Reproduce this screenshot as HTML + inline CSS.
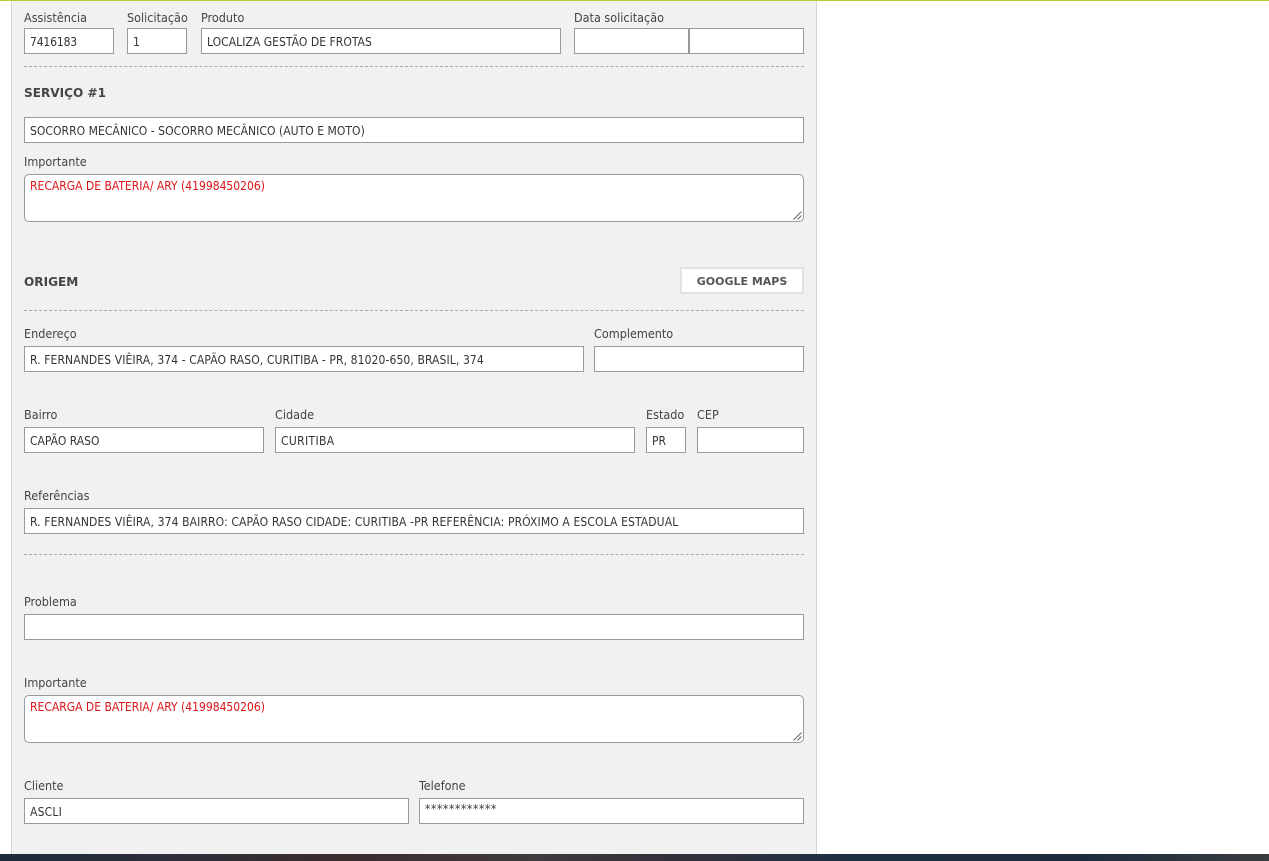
<!DOCTYPE html>
<html lang="pt">
<head>
<meta charset="utf-8">
<style>
html,body{margin:0;padding:0;background:#fff}
body{position:relative;width:1269px;height:861px;overflow:hidden;font-family:"DejaVu Sans Condensed","DejaVu Sans",sans-serif;font-stretch:condensed;font-size:12px;color:#333}
#top{position:absolute;left:0;top:0;width:1269px;height:1px;background:#b5cc3a}
#panel{position:absolute;left:11px;top:1px;width:804px;height:853px;background:#f1f1f1;border-left:1px solid #d6d6d6;border-right:1px solid #d6d6d6}
#bar{position:absolute;left:0;top:854px;width:1269px;height:7px;background:linear-gradient(90deg,#1d2a3a 0,#2c2f3c 12%,#3b2c2e 27%,#3f3a3e 42%,#35303a 52%,#1d3044 68%,#1c2c3d 85%,#3a3d40 100%)}
.l{position:absolute;line-height:13px;height:14px;font-size:12.5px;white-space:nowrap;color:#444}
.i{position:absolute;box-sizing:border-box;height:26px;background:#fff;border:1px solid #999;line-height:27px;padding-left:5px;white-space:nowrap;color:#333}
.t{position:absolute;box-sizing:border-box;height:48px;background:#fff;border:1px solid #999;border-radius:5px;padding-left:5px;line-height:22px;white-space:nowrap;color:#dc1418}
.t svg{position:absolute;right:1px;bottom:1px}
.d{position:absolute;left:24px;width:780px;height:0;border-top:1px dashed #aaa}
.h{position:absolute;left:24px;font-family:"DejaVu Sans",sans-serif;font-stretch:normal;font-weight:bold;font-size:12.1px;line-height:14px;color:#444;white-space:nowrap}
#btn{position:absolute;left:680px;top:267px;width:124px;height:27px;box-sizing:border-box;background:#fff;border:2px solid #e2e2e2;text-align:center;line-height:25px;font-family:"DejaVu Sans",sans-serif;font-stretch:normal;font-weight:bold;font-size:11px;color:#555;white-space:nowrap}
</style>
</head>
<body>
<div id="top"></div>
<div id="panel"></div>

<div class="l" style="left:24px;top:11px">Assistência</div>
<div class="l" style="left:127px;top:11px">Solicitação</div>
<div class="l" style="left:201px;top:11px">Produto</div>
<div class="l" style="left:574px;top:11px">Data solicitação</div>
<div class="i" style="left:24px;top:28px;width:90px;letter-spacing:-.15px">7416183</div>
<div class="i" style="left:127px;top:28px;width:60px">1</div>
<div class="i" style="left:201px;top:28px;width:360px;letter-spacing:.04px">LOCALIZA GESTÃO DE FROTAS</div>
<div class="i" style="left:574px;top:28px;width:115px"></div>
<div class="i" style="left:689px;top:28px;width:115px"></div>
<div class="d" style="top:66px"></div>

<div class="h" style="top:86px">SERVIÇO #1</div>
<div class="i" style="left:24px;top:117px;width:780px;letter-spacing:.04px">SOCORRO MECÂNICO - SOCORRO MECÂNICO (AUTO E MOTO)</div>
<div class="l" style="left:24px;top:155px">Importante</div>
<div class="t" style="left:24px;top:174px;width:780px">RECARGA DE BATERIA/ ARY (41998450206)<svg width="9" height="9" viewBox="0 0 9 9"><path d="M0.5 8.5L8.5 0.5M4.5 8.5L8.5 4.5" stroke="#666" fill="none"/></svg></div>

<div class="h" style="top:275px">ORIGEM</div>
<div id="btn">GOOGLE MAPS</div>
<div class="d" style="top:310px"></div>

<div class="l" style="left:24px;top:327px">Endereço</div>
<div class="l" style="left:594px;top:327px">Complemento</div>
<div class="i" style="left:24px;top:346px;width:560px;letter-spacing:.1px">R. FERNANDES VIÊIRA, 374 - CAPÃO RASO, CURITIBA - PR, 81020-650, BRASIL, 374</div>
<div class="i" style="left:594px;top:346px;width:210px"></div>

<div class="l" style="left:24px;top:408px">Bairro</div>
<div class="l" style="left:275px;top:408px">Cidade</div>
<div class="l" style="left:646px;top:408px">Estado</div>
<div class="l" style="left:697px;top:408px">CEP</div>
<div class="i" style="left:24px;top:427px;width:240px">CAPÃO RASO</div>
<div class="i" style="left:275px;top:427px;width:360px;letter-spacing:.35px">CURITIBA</div>
<div class="i" style="left:646px;top:427px;width:40px">PR</div>
<div class="i" style="left:697px;top:427px;width:107px"></div>

<div class="l" style="left:24px;top:489px">Referências</div>
<div class="i" style="left:24px;top:508px;width:780px;letter-spacing:.115px">R. FERNANDES VIÊIRA, 374 BAIRRO: CAPÃO RASO CIDADE: CURITIBA -PR REFERÊNCIA: PRÓXIMO A ESCOLA ESTADUAL</div>
<div class="d" style="top:554px"></div>

<div class="l" style="left:24px;top:595px">Problema</div>
<div class="i" style="left:24px;top:614px;width:780px"></div>

<div class="l" style="left:24px;top:676px">Importante</div>
<div class="t" style="left:24px;top:695px;width:780px">RECARGA DE BATERIA/ ARY (41998450206)<svg width="9" height="9" viewBox="0 0 9 9"><path d="M0.5 8.5L8.5 0.5M4.5 8.5L8.5 4.5" stroke="#666" fill="none"/></svg></div>

<div class="l" style="left:24px;top:779px">Cliente</div>
<div class="l" style="left:419px;top:779px">Telefone</div>
<div class="i" style="left:24px;top:798px;width:385px;letter-spacing:.2px">ASCLI</div>
<div class="i" style="left:419px;top:798px;width:385px;line-height:20px;letter-spacing:.6px">************</div>

<div id="bar"></div>
</body>
</html>
